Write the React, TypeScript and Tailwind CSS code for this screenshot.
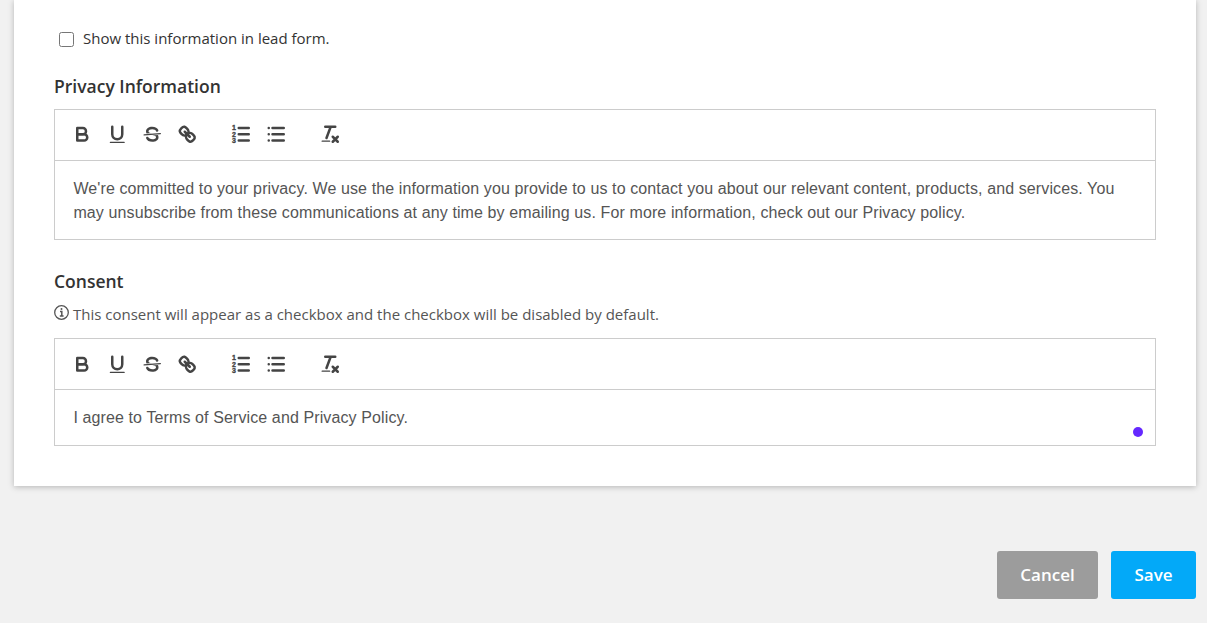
import { useState } from "react";
import type { ReactNode } from "react";

const Icon = ({ children }: { children: ReactNode }) => (
	<svg
		viewBox="0 0 18 18"
		className="w-[22.5px] h-[22.5px] fill-none stroke-[#444] stroke-2 [stroke-linecap:round] [stroke-linejoin:round]">
		{children}
	</svg>
);

const FILL = "fill-[#444] stroke-none";

const TOOLBAR_GROUPS: { name: string; icon: ReactNode }[][] = [
	[
		{
			name: "Bold",
			icon: (
				<>
					<path d="M5 4H9.5A2.5 2.5 0 0 1 12 6.5A2.5 2.5 0 0 1 9.5 9H5Z" />
					<path d="M5 9H10.5A2.5 2.5 0 0 1 13 11.5A2.5 2.5 0 0 1 10.5 14H5Z" />
				</>
			),
		},
		{
			name: "Underline",
			icon: (
				<>
					<path d="M5 3V9A4 4 0 0 0 13 9V3" />
					<rect className={FILL} x="3" y="15" width="12" height="1" rx="0.5" />
				</>
			),
		},
		{
			name: "Strike",
			icon: (
				<>
					<path className="stroke-1" d="M15.5 8.5L2.5 9.5" />
					<path
						className={FILL}
						d="M9.007,8C6.542,7.791,6,7.519,6,6.5,6,5.792,7.283,5,9,5c1.571,0,2.765.679,2.969,1.309a1,1,0,0,0,1.9-.617C13.356,4.106,11.354,3,9,3,6.2,3,4,4.538,4,6.5a3.2,3.2,0,0,0,.5,1.843Z"
					/>
					<path
						className={FILL}
						d="M8.984,10C11.457,10.208,12,10.479,12,11.5c0,.708-1.283,1.5-3,1.5-1.571,0-2.765-.679-2.969-1.309a1,1,0,1,0-1.9.617C4.644,13.894,6.646,15,9,15c2.8,0,5-1.538,5-3.5a3.2,3.2,0,0,0-.5-1.843Z"
					/>
				</>
			),
		},
		{
			name: "Link",
			icon: (
				<>
					<path d="M7 7L11 11" />
					<path d="M8.9,4.577a3.476,3.476,0,0,1,.36,4.679A3.476,3.476,0,0,1,4.577,8.9C3.185,7.5,2.035,6.4,4.217,4.217S7.5,3.185,8.9,4.577Z" />
					<path d="M13.423,9.1a3.476,3.476,0,0,0-4.679-.36,3.476,3.476,0,0,0,.36,4.679c1.392,1.392,2.5,2.542,4.679.36S14.815,10.5,13.423,9.1Z" />
				</>
			),
		},
	],
	[
		{
			name: "Ordered list",
			icon: (
				<>
					<path d="M7 4H15M7 9H15M7 14H15" />
					<g className="fill-[#444] stroke-[#444] stroke-[0.3] font-['Liberation_Sans'] text-[5.6px] font-bold">
						<text x="1.6" y="5.9">1</text>
						<text x="1.6" y="10.9">2</text>
						<text x="1.6" y="15.9">3</text>
					</g>
				</>
			),
		},
		{
			name: "Bullet list",
			icon: <path d="M6 4H15M6 9H15M6 14H15M3 4H3M3 9H3M3 14H3" />,
		},
	],
	[
		{
			name: "Clear formatting",
			icon: (
				<>
					<path d="M5 3H13M6 12L9.35 3M11 11L15 15M15 11L11 15" />
					<rect className={FILL} x="2" y="14" width="7" height="1" rx="0.5" />
				</>
			),
		},
	],
];

function Editor({ children }: { children: ReactNode }) {
	return (
		<div className="border border-[#ccc]">
			<div className="flex gap-[31.5px] h-[51px] pl-[16.4px] pt-[13.2px] border-b border-[#ccc]">
				{TOOLBAR_GROUPS.map((group, i) => (
					<div key={i} className="flex items-start gap-[12.5px]">
						{group.map((item) => (
							<button key={item.name} type="button" aria-label={item.name}>
								<Icon>{item.icon}</Icon>
							</button>
						))}
					</div>
				))}
			</div>
			{children}
		</div>
	);
}

export default function App() {
	const [showInLead, setShowInLead] = useState(false);

	return (
		<div className="h-[623px] overflow-hidden bg-[#f1f1f1] pl-3.5 pr-[11px] font-['Open_Sans',sans-serif] text-[#333]">
			<div className="h-[486px] bg-white px-10 pt-[27px] shadow-[0_1px_6px_rgba(0,0,0,0.25)]">
				<label className="flex items-center h-[22px] pl-[5px] text-[15px]">
					<input
						type="checkbox"
						checked={showInLead}
						onChange={(e) => setShowInLead(e.target.checked)}
						className="w-[15px] h-[15px] mt-0.5 mr-[9px]"
					/>
					Show this information in lead form.
				</label>

				<h2 className="mt-[25px] h-[35px] text-[17.5px] leading-6 font-semibold">Privacy Information</h2>
				<Editor>
					<div className="h-[78px] px-[18.4px] pt-4 font-['Liberation_Sans',sans-serif] text-base tracking-[0.112px] text-[#555]">
						<p>
							We're committed to your privacy. We use the information you provide to us to
							contact you about our relevant content, products, and services. You may
							unsubscribe from these communications at any time by emailing us. For more
							information, check out our Privacy policy.
						</p>
					</div>
				</Editor>

				<h2 className="mt-[29px] text-[17.5px] leading-6 font-semibold">Consent</h2>
				<div className="flex gap-1 mt-2.5 h-[35.4px] text-[15px] leading-[22px] text-[#555]">
					<svg viewBox="0 0 15 15" className="w-[15px] h-[15px] mt-0.5 fill-none stroke-[#555]">
						<circle cx="7.5" cy="7.5" r="6.8" strokeWidth="1.3" />
						<path d="M6 6.5H7.8V11M5.8 11H9.6" strokeWidth="1.5" />
						<circle cx="7.5" cy="4" r="1" className="fill-[#555] stroke-none" />
					</svg>
					<p>This consent will appear as a checkbox and the checkbox will be disabled by default.</p>
				</div>
				<Editor>
					<div className="flex justify-between h-[55px] pl-[18.4px] pr-3 pt-4 font-['Liberation_Sans',sans-serif] text-base tracking-[0.112px] text-[#555]">
						<p>I agree to Terms of Service and Privacy Policy.</p>
						<span className="w-2.5 h-2.5 mt-[20.6px] rounded-full bg-[#6528ff]" />
					</div>
				</Editor>
			</div>

			<div className="flex justify-end gap-[13px] mt-[65px] text-[17px] font-semibold text-white">
				<button type="button" className="w-[101px] h-12 rounded-[3px] bg-[#9c9c9c]">
					Cancel
				</button>
				<button type="button" className="w-[85px] h-12 rounded-[3px] bg-[#03a9f8]">
					Save
				</button>
			</div>
		</div>
	);
}
